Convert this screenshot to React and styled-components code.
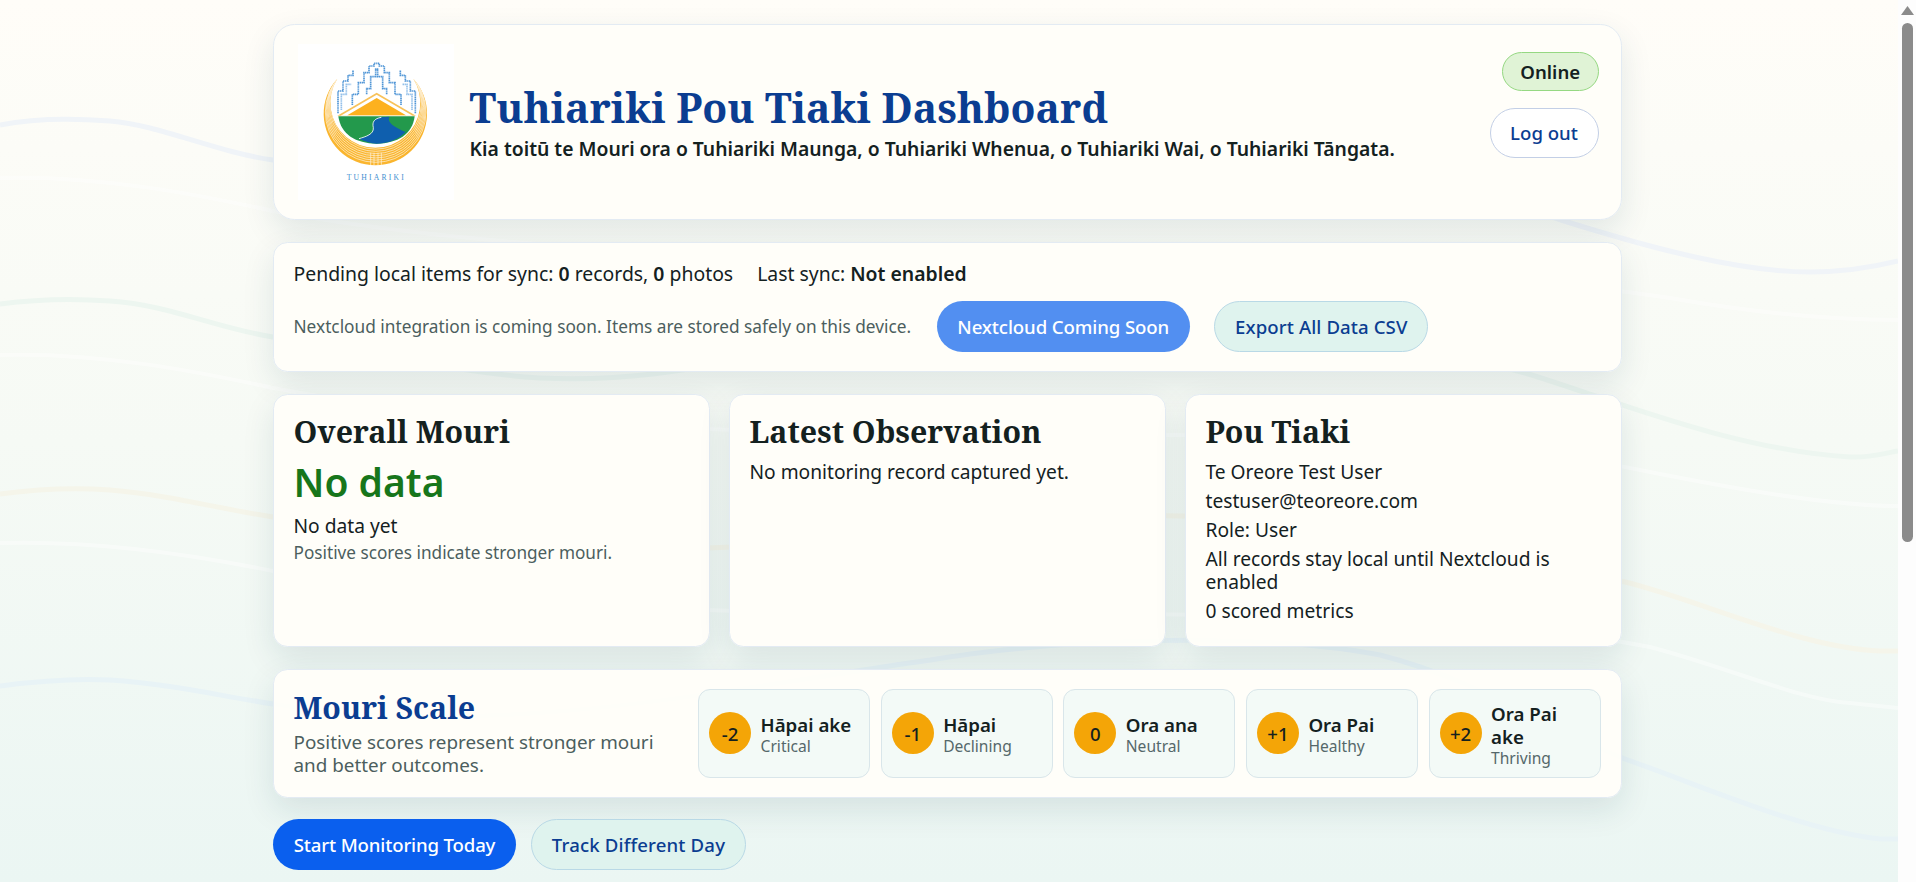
import React from "react";
import styled, { createGlobalStyle } from "styled-components";

const serif = `"Noto Serif", "DejaVu Serif", "Liberation Serif", serif`;
const sans = `"Noto Sans", "Open Sans", "Liberation Sans", sans-serif`;

const Global = createGlobalStyle`
  html, body, #root { margin: 0; height: 100%; }
  body { overflow: hidden; font-family: ${sans}; font-size: 19.2px; line-height: 23.4px; color: #14211f; }
  * { box-sizing: border-box; }
  strong { font-weight: 600; }
`;

const Viewport = styled.div`
  display: flex;
  height: 882px;
  overflow: hidden;
`;
const Main = styled.main`
  position: relative;
  flex: 1;
  min-width: 0;
  overflow: hidden;
  padding: 24.4px 0 0 273.3px;
  background: linear-gradient(180deg, #fffdf8 0%, #f6faf5 50%, #ebf6f3 100%);
`;
const WaveLayer = styled.svg`
  position: absolute;
  inset: 0;
  width: 100%;
  height: 100%;
  pointer-events: none;
`;
const Shell = styled.div`
  position: relative;
  width: 1349px;
  display: flex;
  flex-direction: column;
  gap: 21.6px;
`;
const Card = styled.section`
  background: rgba(255, 254, 249, 0.96);
  border: 1.2px solid #e3ebf3;
  border-radius: 14.4px;
  box-shadow: 0 12px 32px rgba(20, 60, 80, 0.11);
`;

const HeaderCard = styled(Card)`
  display: flex;
  align-items: flex-start;
  justify-content: space-between;
  border-radius: 21.6px;
  padding: 19px 22.8px 19px 23.5px;
`;
const Brand = styled.div`
  display: flex;
  align-items: center;
  gap: 15.8px;
`;
const LogoFrame = styled.svg`
  display: block;
  width: 156px;
  height: 156px;
  background: #fff;
  flex: none;
`;
const Title = styled.h1`
  margin: -1px 0 5px;
  font-family: ${serif};
  font-size: 40.8px;
  line-height: 49px;
  font-weight: 700;
  color: #0b3d91;
`;
const Subtitle = styled.p`
  margin: 0;
  font-weight: 600;
  font-size: 19.33px;
  color: #14211f;
`;
const HeaderActions = styled.div`
  display: flex;
  flex-direction: column;
  align-items: flex-end;
  gap: 16.6px;
  padding-top: 7.6px;
`;
const StatusPill = styled.span`
  display: inline-flex;
  align-items: center;
  justify-content: center;
  width: 96.5px;
  height: 39px;
  border-radius: 20px;
  background: #e0f3d6;
  border: 1.2px solid #95d882;
  font-weight: 600;
  font-size: 18.6px;
`;
const Button = styled.button`
  display: inline-flex;
  align-items: center;
  justify-content: center;
  height: ${(p) => (p.$short ? "50.4px" : "51px")};
  width: ${(p) => p.$w}px;
  padding: 0;
  border-radius: 25.5px;
  font-family: ${sans};
  font-size: 18.6px;
  font-weight: 500;
  cursor: pointer;
  white-space: nowrap;
  letter-spacing: ${(p) => p.$ls || 0}px;
  ${(p) => p.$kind === "primary" && `background:#0a5fee;color:#fff;border:none;`}
  ${(p) => p.$kind === "muted" && `background:#528ff1;color:#fff;border:none;`}
  ${(p) => p.$kind === "soft" && `background:#dff3ee;color:#0b3d91;border:1.2px solid #b9d9e6;`}
  ${(p) => p.$kind === "ghost" && `background:#fff;color:#0b3d91;border:1.2px solid #c3cfe6;`}
`;

const SyncCard = styled(Card)`
  padding: 19.2px;
  display: flex;
  flex-direction: column;
  gap: 15.4px;
`;
const SyncStats = styled.div`
  display: flex;
  gap: 24px;
  font-size: 19.4px;
`;
const SyncControls = styled.div`
  display: flex;
  align-items: center;
  gap: 24.5px;
`;
const Note = styled.span`
  font-size: 17.28px;
  margin-right: 1px;
  color: #4c5e5e;
`;

const MetricGrid = styled.div`
  display: grid;
  grid-template-columns: repeat(3, 1fr);
  gap: 19px;
`;
const Metric = styled(Card)`
  padding: 19.2px;
`;
const CardTitle = styled.h2`
  margin: 0 0 10.6px;
  font-family: ${serif};
  font-size: 30.3px;
  line-height: 35px;
  font-weight: 700;
  color: ${(p) => p.$color || "#14211f"};
`;
const BigValue = styled.div`
  font-size: 39px;
  line-height: 44px;
  font-weight: 600;
  color: #17761b;
  margin-bottom: 10px;
`;
const MutedLine = styled.div`
  font-size: 17.2px;
  line-height: 21px;
  margin-top: 5px;
  color: #4c5e5e;
`;
const InfoLine = styled.p`
  margin: 0 0 5.6px;
  &:last-child {
    margin-bottom: 4.9px;
  }
`;

const ScaleCard = styled(Card)`
  display: flex;
  gap: 19.7px;
  padding: 19.2px 20.6px 19.2px 19.2px;
`;
const ScaleIntro = styled.div`
  flex: 0 0 385px;
`;
const ScaleTitle = styled(CardTitle)`
  margin-bottom: 5.6px;
  margin-top: 1px;
`;
const ScaleText = styled.p`
  margin: 0;
  color: #4c5e5e;
  font-size: 18.85px;
`;
const ScaleList = styled.div`
  flex: 1;
  display: grid;
  grid-template-columns: repeat(5, 1fr);
  gap: 10.5px;
`;
const ScaleItem = styled.div`
  display: flex;
  align-items: center;
  gap: 9.4px;
  padding: 0 10px;
  min-height: 88px;
  background: #f3faf7;
  border: 1.2px solid #d9e6ea;
  border-radius: 12px;
`;
const ScoreDot = styled.span`
  flex: none;
  width: 42px;
  height: 42px;
  border-radius: 50%;
  background: #f4a507;
  display: flex;
  align-items: center;
  justify-content: center;
  font-weight: 500;
  font-size: 18.6px;
  color: #14211f;
`;
const ScaleCopy = styled.div`
  padding-top: 4px;
`;
const ScaleLabel = styled.div`
  font-weight: 600;
  font-size: 18.7px;
  line-height: 23px;
`;
const ScaleSub = styled.div`
  font-size: 15.6px;
  line-height: 21px;
  color: #55686a;
`;

const Actions = styled.div`
  display: flex;
  gap: 15px;
`;

const ScrollTrack = styled.aside`
  flex: 0 0 18px;
  background: #fdfdfd;
  display: flex;
  flex-direction: column;
  align-items: center;
  padding-top: 6px;
`;
const ArrowUp = styled.svg`
  display: block;
  width: 13px;
  height: 9px;
  fill: #8b8b8b;
`;
const Thumb = styled.div`
  width: 11px;
  height: 519px;
  margin-top: 7.7px;
  background: #8b8b8b;
  border-radius: 5.5px;
`;

const waves = [
  ["M0 125 C30 119 70 118 110 121 C160 125 215 152 273 160 C420 182 620 205 760 200 C1000 190 1250 150 1420 180 C1480 192 1530 210 1561 220 C1650 248 1740 272 1810 272 C1840 272 1870 268 1898 261", "#f0f4f8", 5, 1],
  ["M0 304 C30 300 70 298 110 301 C170 305 215 328 273 337 C350 350 470 374 540 378 C620 382 680 372 800 350 C1000 320 1100 320 1300 335 C1400 342 1470 358 1525 373 C1600 395 1730 450 1850 457 C1870 458 1885 453 1898 451", "#edf6f0", 5, 1],
  ["M0 494 C30 490 70 487 110 490 C170 495 215 508 273 517 C500 555 700 560 900 530 C1100 505 1300 515 1450 540 C1500 550 1570 570 1625 582 C1700 600 1800 648 1880 651 L1898 651", "#f5f5ea", 5, 1],
  ["M0 686 C30 682 70 678 110 680 C170 684 215 695 273 704 C500 740 720 690 930 660 C1050 640 1250 630 1380 655 C1480 680 1560 735 1625 759 C1700 785 1800 830 1880 839 L1898 839", "#e8f3f6", 5, 1],
  ["M0 178 C100 175 200 195 273 211 C700 290 1300 240 1670 298 C1750 312 1830 320 1898 320", "#ffffff", 4, 0.4],
  ["M0 355 C100 352 200 372 273 388 C700 470 1300 400 1640 470 C1730 488 1830 506 1898 506", "#ffffff", 4, 0.4],
  ["M0 543 C100 540 200 556 273 571 C700 650 1300 580 1650 647 C1730 668 1800 700 1850 703 L1898 708", "#ffffff", 4, 0.4],
];

const scale = [
  ["-2", "Hāpai ake", "Critical"],
  ["-1", "Hāpai", "Declining"],
  ["0", "Ora ana", "Neutral"],
  ["+1", "Ora Pai", "Healthy"],
  ["+2", "Ora Pai ake", "Thriving"],
];

const stepLeftA = "142,222 142,155 157,155 157,125 172,125 172,108 187,108 187,92";
const stepLeftB = "185,197 185,165 203,165 203,130 220,130 220,100 235,100 235,80 250,80 250,72 258,72";
const stepLeftC = "228,165 228,148 240,148 240,112 255,112 255,90 262,90";
const stepLeftD = "152,212 152,165 167,165 167,135 182,135";
const mirror = "translate(516 0) scale(-1 1)";
const ringSteps = [0.08, 0.2, 0.32, 0.44, 0.56, 0.68, 0.8];

function Logo() {
  return (
    <LogoFrame viewBox="22 14 468 468" role="img" aria-label="Tuhiariki logo">
      <defs>
        <clipPath id="crescent-clip">
          <path d="M140 118 A155 155 0 1 0 368 118 A135 135 0 1 1 140 118 Z" />
        </clipPath>
      </defs>
      <g fill="none" stroke="#4f95d6" strokeWidth="5" strokeDasharray="4 1.6">
        {[stepLeftA, stepLeftB, stepLeftC].map((pts) => (
          <g key={pts}>
            <polyline points={pts} />
            <polyline points={pts} transform={mirror} />
          </g>
        ))}
        <polyline points={stepLeftD} stroke="#93c0ea" />
        <polyline points={stepLeftD} stroke="#93c0ea" transform={mirror} />
      </g>
      <path d="M140 118 A155 155 0 1 0 368 118 A135 135 0 1 1 140 118 Z" fill="#fab62f" />
      <g clipPath="url(#crescent-clip)" fill="none" stroke="#fff" strokeWidth="2.2" opacity="0.8">
        {ringSteps.map((t) => (
          <circle key={t} cx="255" cy={190 + 35 * t} r={135 + 20 * t} />
        ))}
        <path d="M240 340 V385 M250 340 V385 M262 340 V385 M272 340 V385" />
      </g>
      <polygon points="140,229 258,160 376,229" fill="#f8c25a" />
      <polygon points="150,229 258,166 366,229" fill="#fff" />
      <polygon points="170,228 258,176 346,228" fill="#fdb11f" />
      <path d="M143 231 L372 231 C366 285 320 313 258 313 C195 313 150 285 143 231 Z" fill="#23994c" />
      <path d="M272 234 L296 232 C288 250 310 262 345 278 C325 300 290 313 258 313 C240 312 220 305 205 298 C225 292 250 285 248 265 C244 248 250 238 272 234 Z" fill="#0f5fae" />
      <path d="M272 234 C250 238 244 248 248 265 C250 285 225 292 205 298" fill="none" stroke="#fff" strokeWidth="2.5" />
      <text x="257" y="421" textAnchor="middle" fontFamily='"Liberation Serif", serif' fontSize="23" letterSpacing="6.6" fill="#3f8fd0">TUHIARIKI</text>
    </LogoFrame>
  );
}

export default function App() {
  return (
    <Viewport>
      <Global />
      <Main>
        <WaveLayer aria-hidden="true">
          {waves.map(([d, c, w, o]) => (
            <path key={d} d={d} fill="none" stroke={c} strokeWidth={w} opacity={o} />
          ))}
        </WaveLayer>
        <Shell>
          <HeaderCard>
            <Brand>
              <Logo />
              <div>
                <Title>Tuhiariki Pou Tiaki Dashboard</Title>
                <Subtitle>Kia toitū te Mouri ora o Tuhiariki Maunga, o Tuhiariki Whenua, o Tuhiariki Wai, o Tuhiariki Tāngata.</Subtitle>
              </div>
            </Brand>
            <HeaderActions>
              <StatusPill>Online</StatusPill>
              <Button $kind="ghost" $short $w={109}>Log out</Button>
            </HeaderActions>
          </HeaderCard>

          <SyncCard>
            <SyncStats>
              <span>Pending local items for sync: <strong>0</strong> records, <strong>0</strong> photos</span>
              <span>Last sync: <strong>Not enabled</strong></span>
            </SyncStats>
            <SyncControls>
              <Note>Nextcloud integration is coming soon. Items are stored safely on this device.</Note>
              <Button $kind="muted" $w={253.3} $ls={-0.1}>Nextcloud Coming Soon</Button>
              <Button $kind="soft" $w={213.8} $ls={0.1}>Export All Data CSV</Button>
            </SyncControls>
          </SyncCard>

          <MetricGrid>
            <Metric>
              <CardTitle>Overall Mouri</CardTitle>
              <BigValue>No data</BigValue>
              <div>No data yet</div>
              <MutedLine>Positive scores indicate stronger mouri.</MutedLine>
            </Metric>
            <Metric>
              <CardTitle>Latest Observation</CardTitle>
              <InfoLine>No monitoring record captured yet.</InfoLine>
            </Metric>
            <Metric>
              <CardTitle>Pou Tiaki</CardTitle>
              <InfoLine>Te Oreore Test User</InfoLine>
              <InfoLine>testuser@teoreore.com</InfoLine>
              <InfoLine>Role: User</InfoLine>
              <InfoLine>All records stay local until Nextcloud is enabled</InfoLine>
              <InfoLine>0 scored metrics</InfoLine>
            </Metric>
          </MetricGrid>

          <ScaleCard>
            <ScaleIntro>
              <ScaleTitle $color="#0b3d91">Mouri Scale</ScaleTitle>
              <ScaleText>Positive scores represent stronger mouri and better outcomes.</ScaleText>
            </ScaleIntro>
            <ScaleList>
              {scale.map(([score, label, sub]) => (
                <ScaleItem key={score}>
                  <ScoreDot>{score}</ScoreDot>
                  <ScaleCopy>
                    <ScaleLabel>{label}</ScaleLabel>
                    <ScaleSub>{sub}</ScaleSub>
                  </ScaleCopy>
                </ScaleItem>
              ))}
            </ScaleList>
          </ScaleCard>

          <Actions>
            <Button $kind="primary" $w={242.5} $ls={-0.15}>Start Monitoring Today</Button>
            <Button $kind="soft" $w={215.4} $ls={0.15}>Track Different Day</Button>
          </Actions>
        </Shell>
      </Main>
      <ScrollTrack aria-hidden="true">
        <ArrowUp viewBox="0 0 13 9"><path d="M6.5 0 L13 9 H0 Z" /></ArrowUp>
        <Thumb />
      </ScrollTrack>
    </Viewport>
  );
}
